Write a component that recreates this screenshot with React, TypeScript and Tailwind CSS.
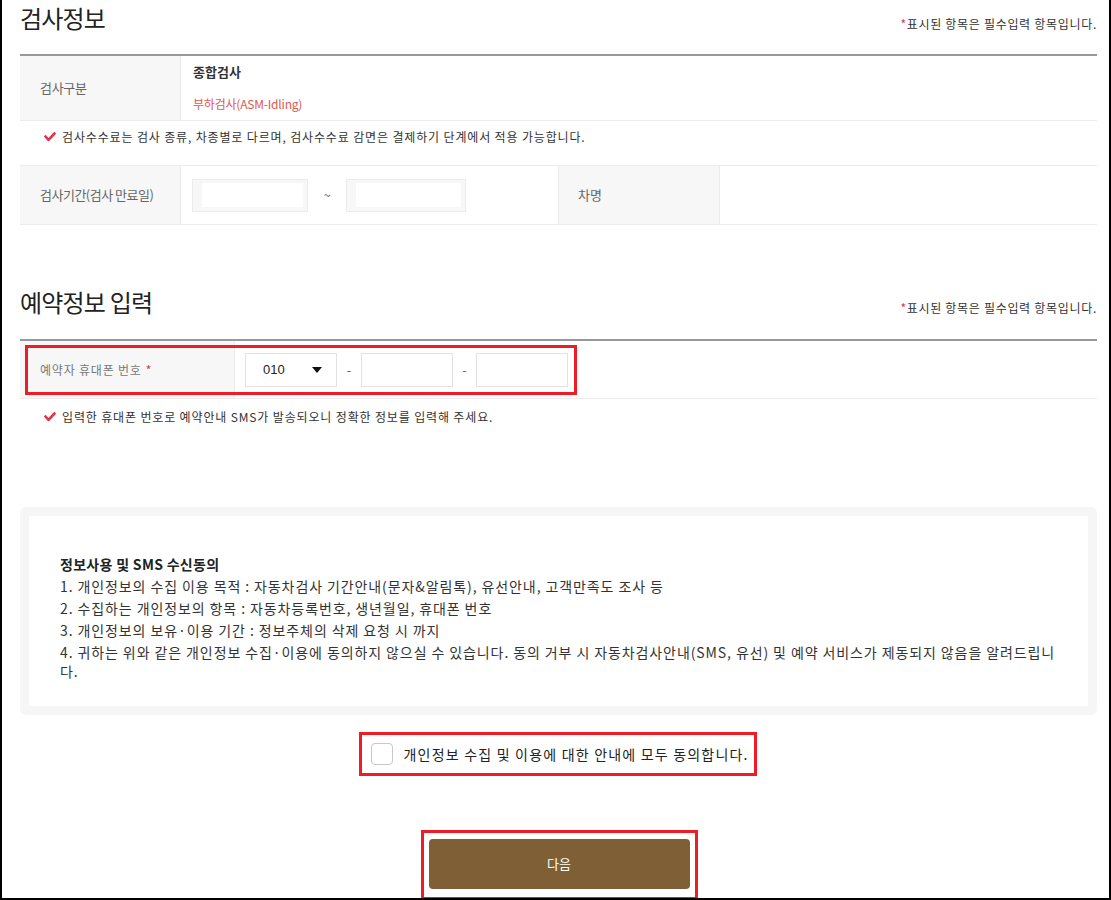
import React from "react";

const font = { fontFamily: '"Noto Sans CJK KR", "Noto Sans", sans-serif' };

function Check() {
  return (
    <svg width="12" height="10" viewBox="0 0 12 10" className="shrink-0">
      <polyline points="1.5,4.5 4.5,7.8 10.5,1.5" fill="none" stroke="#e2334a" strokeWidth="2.6" strokeLinecap="round" strokeLinejoin="round" />
    </svg>
  );
}

function RequiredNote({ mb }: { mb: string }) {
  return (
    <div className={`text-[12px] leading-[16px] text-[#333] tracking-[0.7px] ${mb}`}>
      <span className="text-[#e2334a]">*</span>표시된 항목은 필수입력 항목입니다.
    </div>
  );
}

function DateBox({ w }: { w: string }) {
  return (
    <div className={`${w} h-[33px] border border-[#ececec] bg-[#f7f7f7] flex items-center pl-[9px] pr-[4px]`}>
      <div className="w-full h-[24px] bg-white" />
    </div>
  );
}

export default function App() {
  return (
    <div style={font} className="w-[1111px] h-[900px] overflow-hidden border-l-2 border-r-2 border-b-2 border-black bg-white pl-[18px] pr-[12px] text-[#333]">
      {/* Section 1 header */}
      <div className="h-[54px] flex justify-between items-end">
        <div className="self-start text-[24px] leading-[36px] text-[#222] tracking-[-0.8px]">검사정보</div>
        <RequiredNote mb="mb-[22px]" />
      </div>
      {/* Table 1 */}
      <div className="border-t-2 border-[#999]">
        <div className="flex h-[65px] border-b border-[#ebebeb]">
          <div className="w-[161px] shrink-0 bg-[#f7f7f7] border-r border-[#ebebeb] flex items-center pl-[20px] text-[13px] text-[#666] tracking-[-0.3px]">검사구분</div>
          <div className="flex flex-col pl-[12px] pt-[6px]">
            <div className="text-[13px] leading-[20px] font-bold text-[#333]">종합검사</div>
            <div className="text-[12px] leading-[20px] text-[#e2574c] mt-[12px] tracking-[-0.2px]">부하검사(ASM-Idling)</div>
          </div>
        </div>
      </div>
      <div className="h-[44px] flex items-start pt-[8px] pl-[24px] gap-[6px]">
        <div className="h-[16px] flex items-center"><Check /></div>
        <div className="text-[12px] leading-[16px] text-[#333] tracking-[0.85px]">검사수수료는 검사 종류, 차종별로 다르며, 검사수수료 감면은 결제하기 단계에서 적용 가능합니다.</div>
      </div>
      <div className="flex h-[60px] border-t border-b border-[#ebebeb]">
        <div className="w-[161px] shrink-0 bg-[#f7f7f7] border-r border-[#ebebeb] flex items-center pl-[20px] text-[13px] text-[#666] tracking-[-0.5px]">검사기간(검사 만료일)</div>
        <div className="w-[377px] shrink-0 flex items-center pl-[11px]">
          <DateBox w="w-[116px]" />
          <div className="w-[38px] text-center text-[12px] text-[#555]">~</div>
          <DateBox w="w-[120px]" />
        </div>
        <div className="w-[162px] shrink-0 bg-[#f7f7f7] border-l border-r border-[#ebebeb] flex items-center pl-[19px] text-[13px] text-[#666]">차명</div>
        <div className="flex-1" />
      </div>

      {/* Section 2 header */}
      <div className="mt-[59px] h-[55px] flex justify-between items-end">
        <div className="self-start text-[24px] leading-[36px] text-[#222] tracking-[-0.8px]">예약정보 입력</div>
        <RequiredNote mb="mb-[23px]" />
      </div>
      <div className="border-t-2 border-[#999] border-b border-b-[#ebebeb]">
        <div className="relative flex h-[57px]">
          <div className="w-[215px] shrink-0 bg-[#f7f7f7] border-r border-[#ebebeb] flex items-center pl-[20px] text-[12px] text-[#777] tracking-[0.8px]">
            예약자 휴대폰 번호 <span className="text-[#e2334a] ml-[4px]">*</span>
          </div>
          <div className="flex items-center pl-[10px]">
            <div className="w-[92px] h-[34px] border border-[#e2e2e2] flex items-center justify-between pl-[17px] pr-[14px] text-[13px] text-[#222]" style={{ fontFamily: '"Liberation Sans", Arial, sans-serif' }}>
              <span>010</span>
              <svg width="10" height="6" viewBox="0 0 10 6"><polygon points="0,0 10,0 5,6" fill="#111" /></svg>
            </div>
            <div className="w-[24px] text-center text-[13px] text-[#666]">-</div>
            <div className="w-[92px] h-[34px] border border-[#e2e2e2]" />
            <div className="w-[23px] text-center text-[13px] text-[#666]">-</div>
            <div className="w-[92px] h-[34px] border border-[#e2e2e2]" />
          </div>
          <div className="pointer-events-none absolute left-[5px] top-[4px] w-[552px] h-[50px] border-[3px] border-[#ee1c25]" />
        </div>
      </div>
      <div className="h-[108px] flex items-start pt-[10px] pl-[24px] gap-[6px]">
        <div className="h-[16px] flex items-center"><Check /></div>
        <div className="text-[12px] leading-[16px] text-[#333] tracking-[0.85px]">입력한 휴대폰 번호로 예약안내 SMS가 발송되오니 정확한 정보를 입력해 주세요.</div>
      </div>

      {/* Agreement box */}
      <div className="h-[208px] bg-[#f6f6f6] rounded-[6px] p-[9px]">
        <div className="h-full bg-white pl-[31px] pt-[37px] text-[14px] leading-[22px] text-[#333] tracking-[0.9px] whitespace-nowrap">
          <div className="font-bold text-[#222] tracking-[0.3px]">정보사용 및 SMS 수신동의</div>
          <div>1. 개인정보의 수집 이용 목적 : 자동차검사 기간안내(문자&amp;알림톡), 유선안내, 고객만족도 조사 등</div>
          <div>2. 수집하는 개인정보의 항목 : 자동차등록번호, 생년월일, 휴대폰 번호</div>
          <div>3. 개인정보의 보유·이용 기간 : 정보주체의 삭제 요청 시 까지</div>
          <div className="leading-[19px] pt-[2px]">
            4. 귀하는 위와 같은 개인정보 수집·이용에 동의하지 않으실 수 있습니다. 동의 거부 시 자동차검사안내(SMS, 유선) 및 예약 서비스가 제동되지 않음을 알려드립니
            <br />다.
          </div>
        </div>
      </div>

      {/* Checkbox */}
      <div className="flex justify-center mt-[17px]">
        <div className="ml-[-2px] h-[44px] w-[398px] border-[3px] border-[#ee1c25] flex items-center pl-[9px] gap-[11px]">
          <div className="w-[22px] h-[22px] border border-[#c8c8c8] rounded-[4px] bg-white shrink-0" />
          <div className="text-[14px] text-[#222] tracking-[1.2px] whitespace-nowrap">개인정보 수집 및 이용에 대한 안내에 모두 동의합니다.</div>
        </div>
      </div>

      {/* Button */}
      <div className="flex justify-center mt-[54px]">
        <div className="ml-[1px] w-[277px] h-[70px] border-[3px] border-[#ee1c25] px-[5px] pt-[6px]">
          <div className="w-full h-[50px] bg-[#7f5f35] rounded-[4px] flex items-center justify-center text-[13px] text-white">다음</div>
        </div>
      </div>
    </div>
  );
}
